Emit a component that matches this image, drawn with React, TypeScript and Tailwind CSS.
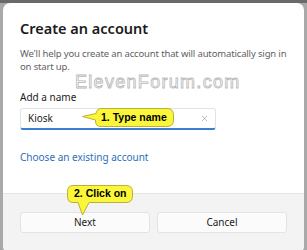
import React from 'react'
import { X } from 'lucide-react'

const Callout: React.FC<{ className: string; label: string; variant: 'left' | 'down' }> = ({
  className,
  label,
  variant,
}) => {
  if (variant === 'left') {
    return (
      <div className={`absolute ${className} w-[94px] h-[24px]`}>
        <svg width="94" height="24" viewBox="0 0 94 24" className="absolute inset-0">
          <path
            d="M20 2.5 H86 Q92.5 2.5 92.5 9 V14 Q92.5 20.5 86 20.5 H20 Q14.5 20.5 14.5 15 V14 L1.5 10.5 L15 7.5 Q16 2.5 20 2.5 Z"
            fill="#fbf63a"
            stroke="#b9b236"
            strokeWidth="1"
          />
        </svg>
        <span className="absolute left-[20px] top-[4px] text-[10.5px] leading-[15px] font-bold text-black font-['Liberation_Sans',Arial,sans-serif]">
          {label}
        </span>
      </div>
    )
  }
  return (
    <div className={`absolute ${className} w-[68px] h-[33px]`}>
      <svg width="68" height="33" viewBox="0 0 68 33" className="absolute inset-0">
        <path
          d="M7 1.5 H60 Q66.5 1.5 66.5 8 V12 Q66.5 18.5 60 18.5 H23 L16.5 31 L12 18.5 H7 Q1.5 18.5 1.5 12 V8 Q1.5 1.5 7 1.5 Z"
          fill="#fbf63a"
          stroke="#b9b236"
          strokeWidth="1"
        />
      </svg>
      <span className="absolute left-[8px] top-[2px] text-[10.5px] leading-[15px] font-bold text-black font-['Liberation_Sans',Arial,sans-serif]">
        {label}
      </span>
    </div>
  )
}

export default function App() {
  return (
    <div className="relative w-[307px] h-[250px] overflow-hidden bg-[#a9a9a9] pt-[3px] px-[3px] font-['Noto_Sans',sans-serif]">
      <div className="h-[3px] absolute top-0 left-0 right-0 bg-[#6a6a6a]" />
      <div className="relative h-[250px] bg-white rounded-[7px] overflow-hidden flex flex-col">
        <div className="px-[17px] pt-[15px] flex flex-col h-[190px]">
          <h1 className="text-[14.5px] leading-[20px] font-semibold text-[#1b1b1b]">Create an account</h1>
          <p className="mt-[9px] -mr-[6px] text-[9.5px] leading-[13px] tracking-[-0.15px] text-[#616161]">
            We'll help you create an account that will automatically sign in on start up.
          </p>
          <div className="ml-[55px] text-[18px] leading-[18px] tracking-[1.3px] text-white font-['Liberation_Sans',Arial,sans-serif] [-webkit-text-stroke:0.8px_#b8b8b8]">
            ElevenForum.com
          </div>
          <label className="text-[10px] leading-[12px] text-[#1b1b1b]">Add a name</label>
          <div className="mt-[5px] w-[196px] h-[22px] flex items-center justify-between pl-[7px] pr-[6px] border border-[#e3e3e3] border-b-[2px] border-b-[#3a80d2] rounded-[3px] bg-white">
            <span className="text-[10px] text-[#1b1b1b]">Kiosk</span>
            <X className="w-[9px] h-[9px] text-[#8a8a8a]" strokeWidth={1.5} />
          </div>
          <a className="mt-[20px] text-[10px] leading-[14px] text-[#2a6fb8]">Choose an existing account</a>
        </div>
        <div className="flex-1 bg-[#f3f3f3] border-t border-[#e6e6e6] px-[17px] pt-[18px]">
          <div className="flex gap-[7px]">
            <button className="w-[130px] h-[21px] bg-[#fbfbfb] border border-[#e3e3e3] rounded-[3px] text-[10px] text-[#1b1b1b]">
              Next
            </button>
            <button className="w-[130px] h-[21px] bg-[#fbfbfb] border border-[#e3e3e3] rounded-[3px] text-[10px] text-[#1b1b1b]">
              Cancel
            </button>
          </div>
        </div>
      </div>
      <Callout className="left-[81px] top-[106px]" label="1. Type name" variant="left" />
      <Callout className="left-[66px] top-[184px]" label="2. Click on" variant="down" />
    </div>
  )
}
